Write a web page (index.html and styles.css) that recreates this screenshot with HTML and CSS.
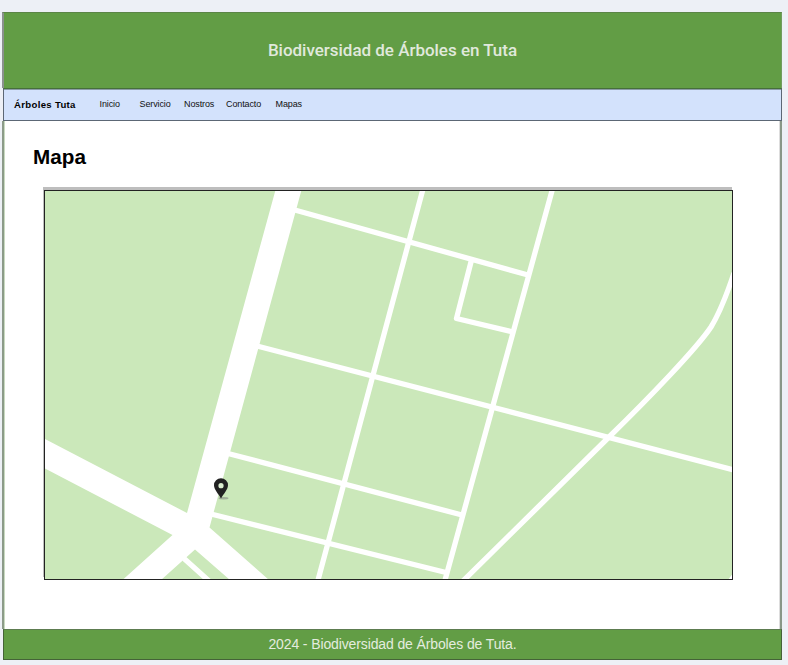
FILE: index.html
```html
<!DOCTYPE html>
<html lang="es">
<head>
<meta charset="utf-8">
<title>Biodiversidad de Árboles en Tuta</title>
<link rel="stylesheet" href="styles.css">
</head>
<body>
<div class="page">
  <header class="header"><h1 class="title">Biodiversidad de Árboles en Tuta</h1></header>
  <nav class="nav">
    <span class="brand">Árboles Tuta</span>
    <a class="link inicio">Inicio</a>
    <a class="link servicio">Servicio</a>
    <a class="link nostros">Nostros</a>
    <a class="link contacto">Contacto</a>
    <a class="link">Mapas</a>
  </nav>
  <main class="main">
    <h2 class="heading">Mapa</h2>
    <div class="map">
      <svg class="streets" width="687" height="388" viewBox="45 191 687 388">
        <g fill="#fff">
          <path d="M275.500 190H301.500L209.500 527.500L269 580H230L195 549.500L161 580H122.500L172.500 535L44 468V438.500L187 513Z"/>
          <path d="M733 573V580H728Z"/>
        </g>
        <g fill="none" stroke="#fff" stroke-width="5.300">
          <path d="M423 189L317.500 582M552.500 189L444.500 582"/>
          <path d="M293 209.500L528 275M257 346L734 470M228 453.500L462 515M211 514L446 572.500"/>
          <path d="M471.500 260L456.500 318.500L513 332" stroke-linejoin="round"/>
          <path d="M734 273C727 294 719 314 711 327C697 348 650 397 608 438L463 581M184 558.500L209 581"/>
        </g>
        <ellipse cx="223.500" cy="498.200" rx="5" ry="1.200" fill="#777" opacity=".5"/>
        <path d="M221 498.500C218.500 494 214 489.500 214 485.300A7 7 0 0 1 228 485.300C228 489.500 223.500 494 221 498.500Z" fill="#222"/>
        <circle cx="221" cy="485.700" r="2.600" fill="#dcefd1"/>
      </svg>
    </div>
  </main>
  <footer class="footer"><span class="copy">2024 - Biodiversidad de Árboles de Tuta.</span></footer>
</div>
</body>
</html>
```
FILE: styles.css
```css
* { box-sizing: border-box; }
body {
  margin: 0;
  padding: 12px 6px 5px 2px;
  height: 665px;
  background: #edf0f6;
  font-family: "Liberation Sans", Arial, sans-serif;
  overflow: hidden;
}
.page { display: flex; flex-direction: column; height: 648px; }
.header {
  height: 76px;
  display: flex;
  justify-content: center;
  background: #629d45;
  border-top: 1px solid #5b8546;
  border-left: 2px solid #8b918e;
  border-right: 1px solid #719d60;
}
.title {
  margin: 27px 0 0;
  font: 500 17px/20px Roboto, sans-serif;
  letter-spacing: -0.02px;
  color: #e0e9dc;
}
.nav {
  height: 33px;
  margin-left: 1px;
  display: flex;
  align-items: flex-start;
  padding: 9px 0 0 10px;
  background: #d3e2fc;
  border: 1px solid #5c6775;
  border-top: 1px solid #46703a;
  box-shadow: inset 0 1px #8b9ba7;
}
.brand { width: 85.5px; font-size: 9.6px; line-height: 14px; font-weight: bold; letter-spacing: 0.32px; color: #000; }
.link { font-size: 9px; line-height: 12px; letter-spacing: -0.12px; color: #111; }
.inicio { width: 40px; }
.servicio { width: 44.5px; }
.nostros { width: 42px; }
.contacto { width: 49.5px; }
.main {
  flex: 1;
  padding: 23px 0 0 29px;
  background: #fff;
  border-left: 2px solid #8c9b89;
  border-right: 2px solid #899787;
  box-shadow: inset 1px 0 #c8dac0, inset -1px 0 #ddd;
}
.heading { margin: 0; font-size: 20.7px; line-height: 26px; }
.map {
  width: 689px;
  height: 390px;
  margin: 20px 0 0 11px;
  border: 1px solid #222;
  background: #cbe8ba;
  box-shadow: -1px -3px 0 #bebebe;
}
.streets { display: block; }
.footer {
  height: 31px;
  margin-left: 1px;
  display: flex;
  justify-content: center;
  background: #629d45;
  border: 1px solid #456338;
  border-top-color: #5d7c50;
}
.copy { margin-top: 6px; font-size: 14px; line-height: 17px; letter-spacing: -0.12px; color: #e4ecdf; }
```
